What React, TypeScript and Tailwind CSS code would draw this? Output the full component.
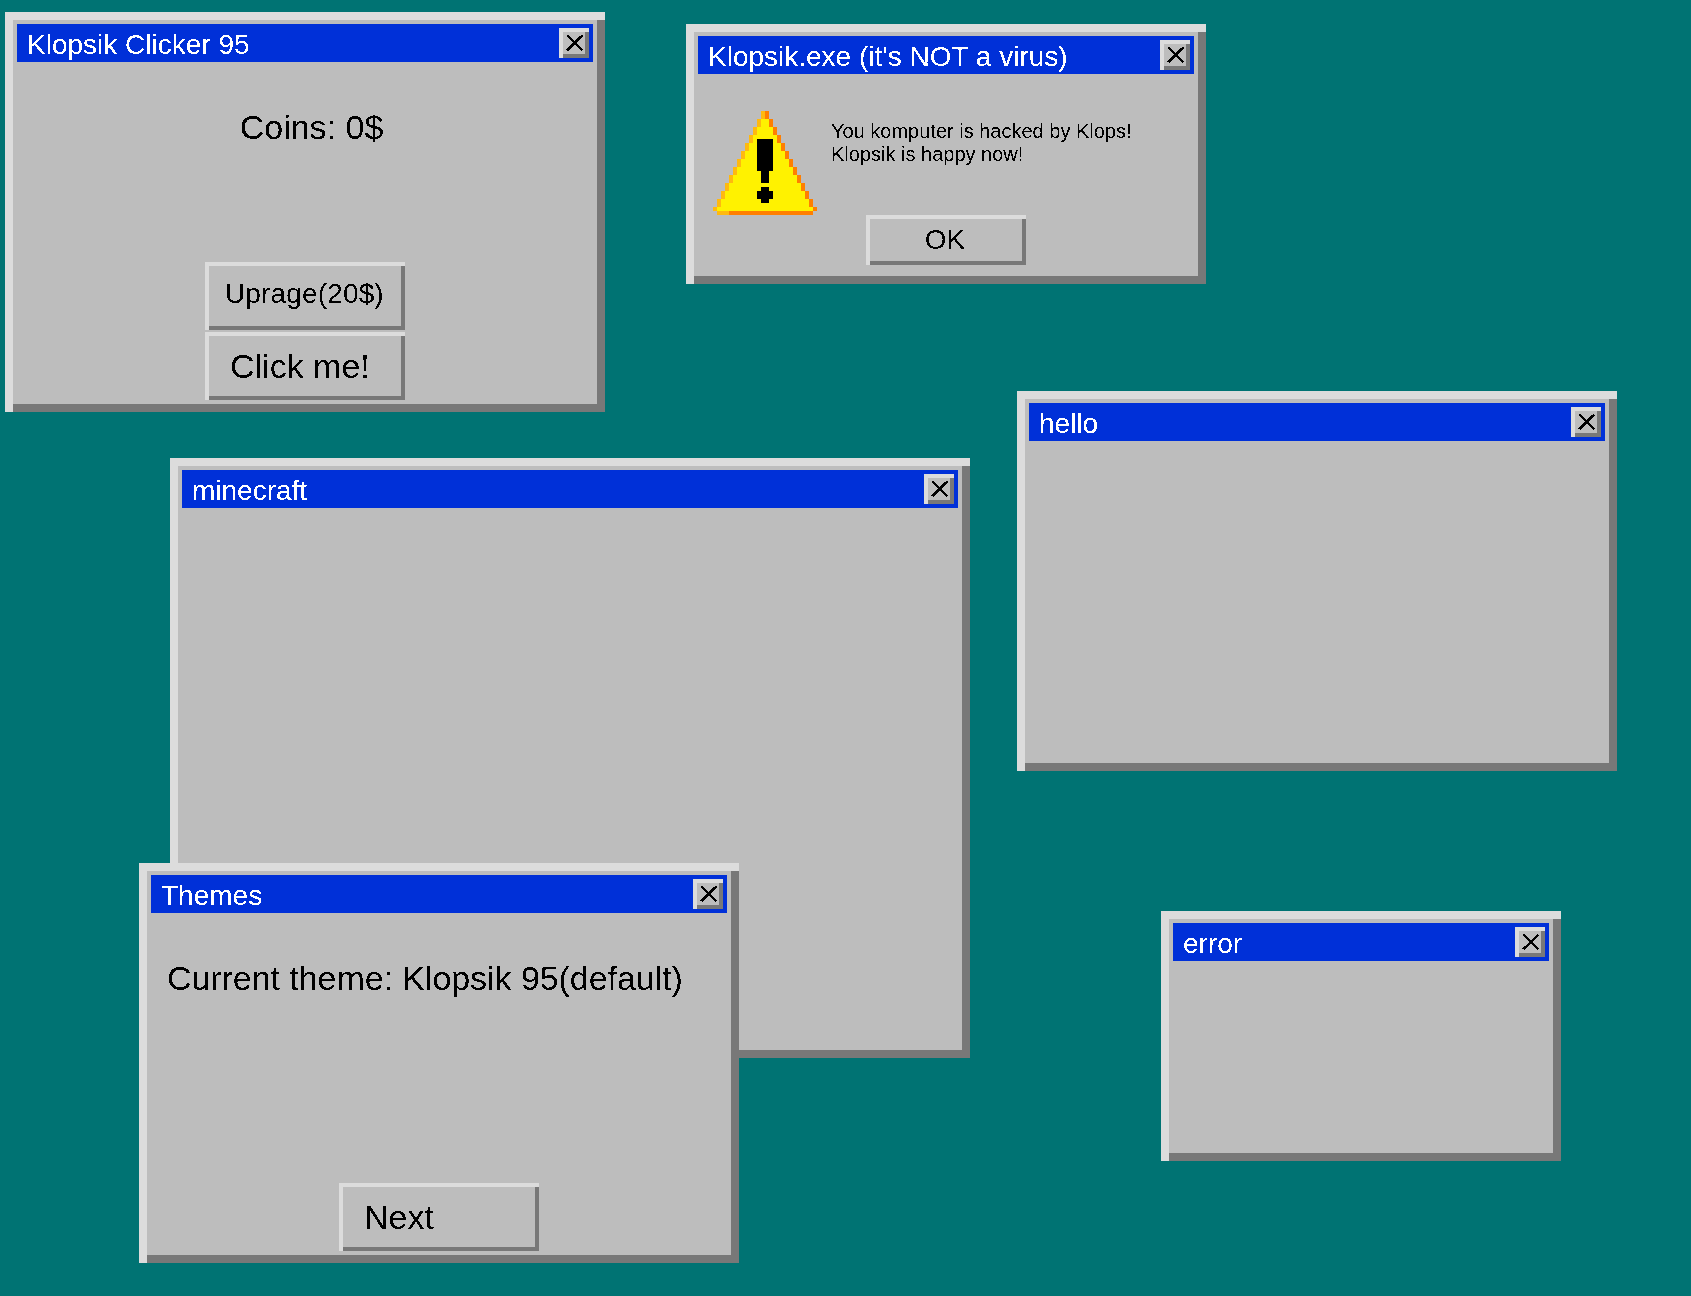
import React from 'react';

const FONT = "font-['Liberation_Sans',Arial,sans-serif]";

// the reference text has no font smoothing, so its alpha gets thresholded
const ALIASED = '[filter:url(#aliased-text)]';

const YELLOW = '#fff200';
const ORANGE = '#ff7f00';
const AMBER = '#ffb90f';

// [row, first col, last col, colour] for the pixel warning sign, one grid cell = 4px
function warningCells() {
  const cells: [number, number, number, string][] = [];
  cells.push([0, 12, 12, AMBER], [0, 13, 13, ORANGE], [1, 12, 12, AMBER], [1, 13, 13, ORANGE]);
  for (let step = 1; step <= 11; step++) {
    const left = 12 - step;
    const right = 13 + step;
    for (const row of [step * 2, step * 2 + 1]) {
      cells.push([row, left, left, AMBER], [row, left + 1, right - 1, YELLOW], [row, right, right, ORANGE]);
    }
  }
  cells.push([24, 0, 0, AMBER], [24, 1, 24, YELLOW], [24, 25, 25, ORANGE]);
  cells.push([25, 1, 3, AMBER], [25, 4, 24, ORANGE]);
  for (let row = 7; row <= 14; row++) cells.push([row, 11, 14, '#000']);
  for (let row = 15; row <= 17; row++) cells.push([row, 12, 13, '#000']);
  cells.push([19, 12, 13, '#000'], [20, 11, 14, '#000'], [21, 11, 14, '#000'], [22, 12, 13, '#000']);
  return cells;
}

const WarningIcon = () => (
  <svg width="104" height="104" viewBox="0 0 26 26" shapeRendering="crispEdges" className="block shrink-0">
    {warningCells().map(([row, from, to, fill], i) => (
      <rect key={i} x={from} y={row} width={to - from + 1} height="1" fill={fill} />
    ))}
  </svg>
);

const raised = 'bg-[#bdbdbd] shadow-[inset_4px_4px_0_#dcdcdc,inset_-4px_-4px_0_#787878]';

const CloseButton = () => (
  <div className={`${raised} w-[30px] h-[30px] flex items-center justify-center`}>
    <svg width="20" height="16" viewBox="0 0 20 16" shapeRendering="crispEdges" className="block ml-[1px]">
      <path d="M2.5 0.5 L17.5 15.5 M17.5 0.5 L2.5 15.5" stroke="#000" strokeWidth="2.8" fill="none" />
    </svg>
  </div>
);

type WindowProps = {
  title: string;
  className: string;
  children?: React.ReactNode;
};

const Window = ({ title, className, children }: WindowProps) => (
  <div
    className={`absolute flex flex-col p-[12px] bg-[#bdbdbd] shadow-[inset_8px_8px_0_#dcdcdc,inset_-8px_-8px_0_#787878] ${className}`}
  >
    <div className="h-[38px] shrink-0 flex items-center justify-between bg-[#0030d8] pl-[10px] pr-[4px]">
      <span className={`mt-[4px] text-[28px] leading-[32px] text-white ${ALIASED}`}>{title}</span>
      <CloseButton />
    </div>
    {children}
  </div>
);

const PushButton = ({ className, children }: { className: string; children: React.ReactNode }) => (
  <button className={`${raised} block ${className}`}>
    <span className={`block ${ALIASED}`}>{children}</span>
  </button>
);

export default function App() {
  return (
    <div className={`relative w-[1691px] h-[1296px] overflow-hidden bg-[#007373] text-black ${FONT}`}>
      <svg width="0" height="0" className="absolute">
        <filter id="aliased-text" colorInterpolationFilters="sRGB">
          <feComponentTransfer>
            <feFuncA type="discrete" tableValues="0 1" />
          </feComponentTransfer>
        </filter>
      </svg>

      <Window title="Klopsik Clicker 95" className="left-[5px] top-[12px] w-[600px] h-[400px]">
        <div className="flex-1 flex flex-col items-center">
          <p className={`mt-[46px] ml-[13px] text-[34px] leading-[39px] ${ALIASED}`}>Coins: 0$</p>
          <div className="mt-auto flex flex-col gap-[2px]">
            <PushButton className="w-[200px] h-[68px] pl-[20px] pb-[4px] text-left text-[28px] tracking-[0.15px]">Uprage(20$)</PushButton>
            <PushButton className="w-[200px] h-[68px] pl-[25px] text-left text-[34px]">Click me!</PushButton>
          </div>
        </div>
      </Window>

      <Window title="Klopsik.exe (it's NOT a virus)" className="left-[686px] top-[24px] w-[520px] h-[260px]">
        <div className="flex-1 flex flex-col">
          <div className="flex items-start mt-[37px] ml-[15px]">
            <WarningIcon />
            <p className={`ml-[14px] mt-[9px] text-[20px] leading-[23px] ${ALIASED}`}>
              You komputer is hacked by Klops!
              <br />
              Klopsik is happy now!
            </p>
          </div>
          <PushButton className="w-[160px] h-[50px] mt-auto mb-[8px] pr-[2px] self-center text-center text-[28px]">OK</PushButton>
        </div>
      </Window>

      <Window title="hello" className="left-[1017px] top-[391px] w-[600px] h-[380px]" />
      <Window title="minecraft" className="left-[170px] top-[458px] w-[800px] h-[600px]" />
      <Window title="error" className="left-[1161px] top-[911px] w-[400px] h-[250px]" />

      <Window title="Themes" className="left-[139px] top-[863px] w-[600px] h-[400px]">
        <div className="flex-1 flex flex-col">
          <p className={`mt-[46px] ml-[16px] text-[34px] leading-[39px] tracking-[-0.06px] ${ALIASED}`}>Current theme: Klopsik 95(default)</p>
          <PushButton className="w-[200px] h-[68px] mt-auto self-center pl-[25px] text-left text-[34px]">Next</PushButton>
        </div>
      </Window>
    </div>
  );
}
